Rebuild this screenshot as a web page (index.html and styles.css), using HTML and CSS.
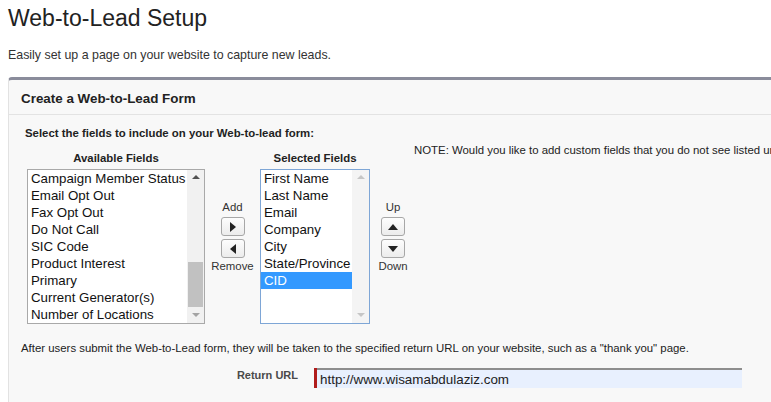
FILE: index.html
```html
<!DOCTYPE html>
<html lang="en">
<head>
    <meta charset="UTF-8">
    <title>Web-to-Lead Setup</title>
    <link rel="stylesheet" href="styles.css">
</head>
<body>
    <div class="page">
        <h1>Web-to-Lead Setup</h1>
        <p class="intro">Easily set up a page on your website to capture new leads.</p>

        <div class="panel">
            <div class="panel-head">Create a Web-to-Lead Form</div>
            <div class="panel-body">
                <div class="pick-title">Select the fields to include on your Web-to-lead form:</div>
                <div class="picker">
                    <div class="col">
                        <div class="col-label">Available Fields</div>
                        <div class="listbox available">
                            <div class="items">
                                <div class="item">Campaign Member Status</div>
                                <div class="item">Email Opt Out</div>
                                <div class="item">Fax Opt Out</div>
                                <div class="item">Do Not Call</div>
                                <div class="item">SIC Code</div>
                                <div class="item">Product Interest</div>
                                <div class="item">Primary</div>
                                <div class="item">Current Generator(s)</div>
                                <div class="item">Number of Locations</div>
                            </div>
                            <div class="scroll">
                                <span class="arrow up"></span>
                                <div class="track"><div class="thumb"></div></div>
                                <span class="arrow down"></span>
                            </div>
                        </div>
                    </div>

                    <div class="mover">
                        <span>Add</span>
                        <button class="btn"><svg width="8" height="10" viewBox="0 0 8 10"><path d="M1 0L7 5L1 10Z" fill="#222"/></svg></button>
                        <button class="btn"><svg width="8" height="10" viewBox="0 0 8 10"><path d="M7 0L1 5L7 10Z" fill="#222"/></svg></button>
                        <span>Remove</span>
                    </div>

                    <div class="col">
                        <div class="col-label">Selected Fields</div>
                        <div class="listbox selected">
                            <div class="items">
                                <div class="item">First Name</div>
                                <div class="item">Last Name</div>
                                <div class="item">Email</div>
                                <div class="item">Company</div>
                                <div class="item">City</div>
                                <div class="item">State/Province</div>
                                <div class="item active">CID</div>
                            </div>
                            <div class="scroll off">
                                <span class="arrow up"></span>
                                <div class="track"></div>
                                <span class="arrow down"></span>
                            </div>
                        </div>
                    </div>

                    <div class="mover order">
                        <span>Up</span>
                        <button class="btn"><svg width="10" height="6" viewBox="0 0 10 6"><path d="M0 6L5 0L10 6Z" fill="#222"/></svg></button>
                        <button class="btn"><svg width="10" height="6" viewBox="0 0 10 6"><path d="M0 0L5 6L10 0Z" fill="#222"/></svg></button>
                        <span>Down</span>
                    </div>

                    <div class="note">NOTE: Would you like to add custom fields that you do not see listed under Available Fields?</div>
                </div>

                <p class="after">After users submit the Web-to-Lead form, they will be taken to the specified return URL on your website, such as a "thank you" page.</p>

                <div class="url-row">
                    <label class="url-label">Return URL</label>
                    <div class="req"></div>
                    <input class="url-input" type="text" value="http://www.wisamabdulaziz.com">
                </div>
            </div>
        </div>
    </div>
</body>
</html>
```

FILE: styles.css
```css
body {
    margin: 0;
    font-family: "Liberation Sans", Arial, sans-serif;
    color: #222;
    background: #fff;
    overflow: hidden;
}
.page {
    padding: 0 0 0 8px;
    width: 1000px;
}
h1 {
    font-size: 23px;
    font-weight: normal;
    margin: 0;
    padding-top: 4px;
    line-height: 28px;
    color: #222;
}
.intro {
    font-size: 12.4px;
    color: #333;
    margin: 16px 0 0;
    line-height: 14px;
}
.panel {
    margin-top: 15px;
    width: 980px;
    background: #f8f8f8;
    border-top: 3px solid #8a8c9b;
    border-left: 1px solid #e2e2e2;
    border-radius: 4px 0 0 0;
}
.panel-head {
    font-size: 13.4px;
    font-weight: bold;
    color: #222;
    padding: 11px 12px 0;
    height: 23px;
    border-bottom: 1px solid #e3e3e3;
}
.panel-body {
    padding: 12px 0 20px 12px;
}
.pick-title {
    font-size: 11.4px;
    font-weight: bold;
    padding-left: 4px;
    line-height: 13px;
}
.picker {
    display: flex;
    align-items: flex-start;
    margin-top: 12px;
    padding-left: 6px;
}
.col {
    display: flex;
    flex-direction: column;
    align-items: center;
}
.col-label {
    font-size: 11.4px;
    font-weight: bold;
    line-height: 13px;
    margin-bottom: 4px;
}
.listbox {
    display: flex;
    background: #fff;
    border: 1px solid #a9a9a9;
    height: 153px;
}
.available {
    width: 176px;
}
.selected {
    width: 108px;
    border-color: #7ea6d6;
}
.items {
    flex: 1;
    font-size: 13.3px;
    line-height: 17px;
    color: #111;
}
.item {
    padding-left: 3px;
    white-space: nowrap;
}
.item.active {
    background: #3399ff;
    color: #fff;
}
.scroll {
    width: 17px;
    display: flex;
    flex-direction: column;
    background: #f1f1f1;
}
.scroll .track {
    flex: 1;
    display: flex;
    flex-direction: column;
    justify-content: flex-end;
    padding: 0 1px;
}
.thumb {
    height: 45px;
    background: #c1c1c1;
    margin-bottom: 1px;
}
.arrow {
    height: 15px;
    position: relative;
}
.arrow::after {
    content: "";
    position: absolute;
    left: 5px;
    top: 5px;
    border-left: 4px solid transparent;
    border-right: 4px solid transparent;
}
.arrow.up::after {
    border-bottom: 4px solid #505050;
}
.arrow.down::after {
    border-top: 4px solid #a3a3a3;
}
.scroll.off {
    background: #f4f4f4;
}
.scroll.off .arrow.up::after {
    border-bottom-color: #c6c6c6;
}
.scroll.off .arrow.down::after {
    border-top-color: #c6c6c6;
}
.mover {
    width: 55px;
    display: flex;
    flex-direction: column;
    align-items: center;
    font-size: 11.4px;
    color: #333;
    padding-top: 49px;
    line-height: 13px;
}
.mover .btn {
    width: 24px;
    height: 19px;
    margin-top: 3px;
    padding: 0;
    display: flex;
    align-items: center;
    justify-content: center;
    background: linear-gradient(#fdfdfd, #ececec);
    border: 1px solid #a7a7a7;
    border-radius: 3px;
}
.mover .btn + span {
    margin-top: 2px;
}
.order {
    width: 46px;
}
.note {
    font-size: 11.4px;
    color: #222;
    white-space: nowrap;
    margin-top: -8px;
    margin-left: -2px;
}
.after {
    font-size: 11.4px;
    margin: 18px 0 0 0;
    line-height: 13px;
    color: #222;
}
.url-row {
    display: flex;
    align-items: flex-start;
    margin-top: 13px;
}
.url-label {
    width: 277px;
    text-align: right;
    font-size: 11px;
    line-height: 13px;
    padding-top: 1px;
    font-weight: bold;
    color: #4a4a4a;
    padding-right: 16px;
}
.req {
    width: 3px;
    height: 20px;
    background: #b01c1c;
}
.url-input {
    width: 425px;
    height: 20px;
    box-sizing: border-box;
    border: none;
    border-top: 2px solid #8e8e8e;
    background: #e8f0fe;
    font-family: "Liberation Sans", Arial, sans-serif;
    font-size: 13.4px;
    padding: 0 3px;
    color: #222;
    outline: none;
}
```
